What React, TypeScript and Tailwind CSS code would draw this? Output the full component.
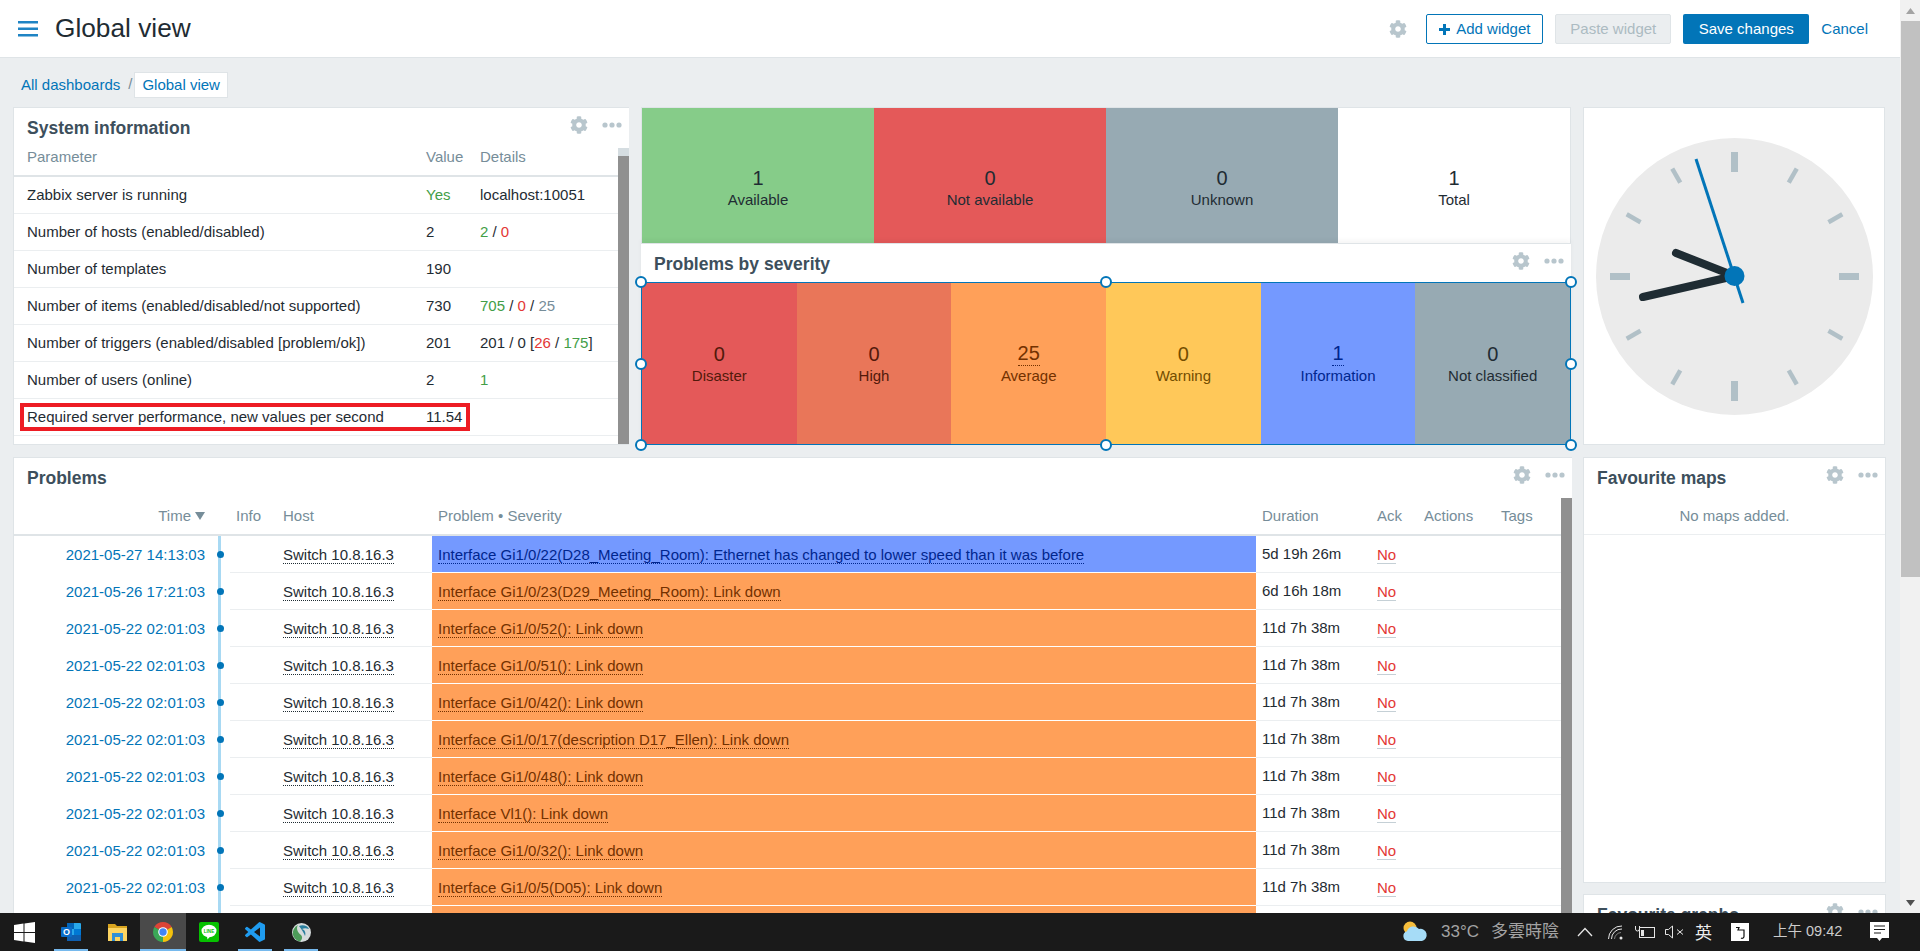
import { FaCog } from 'react-icons/fa'

const problems = [
  { time: '2021-05-27 14:13:03', text: 'Interface Gi1/0/22(D28_Meeting_Room): Ethernet has changed to lower speed than it was before', duration: '5d 19h 26m', info: true },
  { time: '2021-05-26 17:21:03', text: 'Interface Gi1/0/23(D29_Meeting_Room): Link down', duration: '6d 16h 18m' },
  { time: '2021-05-22 02:01:03', text: 'Interface Gi1/0/52(): Link down', duration: '11d 7h 38m' },
  { time: '2021-05-22 02:01:03', text: 'Interface Gi1/0/51(): Link down', duration: '11d 7h 38m' },
  { time: '2021-05-22 02:01:03', text: 'Interface Gi1/0/42(): Link down', duration: '11d 7h 38m' },
  { time: '2021-05-22 02:01:03', text: 'Interface Gi1/0/17(description D17_Ellen): Link down', duration: '11d 7h 38m' },
  { time: '2021-05-22 02:01:03', text: 'Interface Gi1/0/48(): Link down', duration: '11d 7h 38m' },
  { time: '2021-05-22 02:01:03', text: 'Interface Vl1(): Link down', duration: '11d 7h 38m' },
  { time: '2021-05-22 02:01:03', text: 'Interface Gi1/0/32(): Link down', duration: '11d 7h 38m' },
  { time: '2021-05-22 02:01:03', text: 'Interface Gi1/0/5(D05): Link down', duration: '11d 7h 38m' },
]

const severities = [
  { label: 'Disaster', value: '0', cell: 'bg-[#e45959] text-[#52190b]' },
  { label: 'High', value: '0', cell: 'bg-[#e97659] text-[#52190b]' },
  { label: 'Average', value: '25', cell: 'bg-[#ffa059] text-[#733100]', link: true },
  { label: 'Warning', value: '0', cell: 'bg-[#ffc859] text-[#734d00]' },
  { label: 'Information', value: '1', cell: 'bg-[#7499ff] text-[#00268e]', link: true },
  { label: 'Not classified', value: '0', cell: 'bg-[#97aab3] text-[#1f2c33]' },
]

const hosts = [
  { label: 'Available', value: '1', cell: 'bg-[#86cc89] pt-[25px]' },
  { label: 'Not available', value: '0', cell: 'bg-[#e45959] pt-[25px]' },
  { label: 'Unknown', value: '0', cell: 'bg-[#97aab3] pt-[25px]' },
  { label: 'Total', value: '1', cell: 'bg-white pt-[25px]' },
]

function WidgetIcons() {
  return (
    <div className="flex items-center self-start gap-[14px] pt-[8px] pr-[7px]">
      <FaCog className="w-[18px] h-[18px] text-[#b8c6cd]" />
      <svg width="20" height="6" viewBox="0 0 20 6" className="text-[#b8c6cd]" fill="currentColor">
        <circle cx="3" cy="3" r="2.6" />
        <circle cx="10" cy="3" r="2.6" />
        <circle cx="17" cy="3" r="2.6" />
      </svg>
    </div>
  )
}

function WidgetHead({ title, short }: { title: string; short?: boolean }) {
  return (
    <div className={`flex justify-between pl-[13px] shrink-0 ${short ? 'h-[38px]' : 'h-[40px]'}`}>
      <div className="text-[17.5px] font-bold text-[#3d4f5c] leading-[40px] whitespace-nowrap">{title}</div>
      <WidgetIcons />
    </div>
  )
}

function Stat({ label, value, cell, link }: { label: string; value: string; cell: string; link?: boolean }) {
  return (
    <div className={`flex-1 flex flex-col items-center justify-center ${cell}`}>
      <div className={`text-[20px] leading-[24px] ${link ? 'border-b border-dotted border-current' : ''}`}>{value}</div>
      <div className="text-[15px] leading-[20px]">{label}</div>
    </div>
  )
}

function Handle({ pos }: { pos: string }) {
  return <div className={`absolute w-[12px] h-[12px] rounded-full bg-white border-2 border-[#0275b8] ${pos}`} />
}

function SysRow({ name, value, valueClass, children, marked }: { name: string; value: string; valueClass?: string; children?: React.ReactNode; marked?: boolean }) {
  return (
    <div className="relative flex items-center h-[37px] border-b border-[#ebeef0] text-[#1f2c33]">
      <div className="w-[412px] pl-[13px]">{name}</div>
      <div className={`w-[54px] ${valueClass ?? ''}`}>{value}</div>
      <div>{children}</div>
      {marked && <div className="absolute left-[6px] top-[4px] w-[450px] h-[28px] border-[4px] border-[#ed1c24]" />}
    </div>
  )
}

function Clock() {
  const ticks = Array.from({ length: 12 }, (_, i) => i * 30)
  return (
    <svg width="277" height="277" viewBox="0 0 277 277">
      <circle cx="138.5" cy="138.5" r="138.5" fill="#ebebeb" />
      {ticks.map((a) =>
        a % 90 === 0 ? (
          <rect key={a} x="135" y="14" width="7" height="20" fill="#b1c0c7" transform={`rotate(${a} 138.5 138.5)`} />
        ) : (
          <rect key={a} x="136.25" y="14" width="4.5" height="16" fill="#b1c0c7" transform={`rotate(${a} 138.5 138.5)`} />
        )
      )}
      <line x1="138.5" y1="138" x2="47" y2="159" stroke="#1f2c33" strokeWidth="8" strokeLinecap="round" />
      <line x1="138.5" y1="138" x2="80" y2="115" stroke="#1f2c33" strokeWidth="8" strokeLinecap="round" />
      <line x1="100" y1="21" x2="147" y2="165" stroke="#0275b8" strokeWidth="3" />
      <circle cx="138.5" cy="138" r="10" fill="#0275b8" />
    </svg>
  )
}

function TaskItem({ children, active, open }: { children: React.ReactNode; active?: boolean; open?: boolean }) {
  return (
    <div className={`relative w-[46px] h-full flex items-center justify-center ${active ? 'bg-[#4a4a4a]' : ''}`}>
      {children}
      {open && <div className={`absolute bottom-0 h-[2px] bg-[#76b9ed] ${active ? 'inset-x-0' : 'inset-x-[6px]'}`} />}
    </div>
  )
}

function Taskbar() {
  return (
    <div className="relative z-10 h-[38px] bg-[#1a1a1a] flex items-stretch shrink-0 font-['Liberation_Sans','Noto_Sans_CJK_TC',sans-serif]">
      <div className="w-[48px] flex items-center justify-center">
        <svg width="21" height="21" viewBox="0 0 21 21" fill="#fff">
          <polygon points="0,3 9.5,1.6 9.5,10 0,10" />
          <polygon points="10.5,1.4 21,0 21,10 10.5,10" />
          <polygon points="0,11 9.5,11 9.5,19.4 0,18" />
          <polygon points="10.5,11 21,11 21,21 10.5,19.6" />
        </svg>
      </div>
      <TaskItem open>
        <svg width="21" height="20" viewBox="0 0 21 20">
          <rect x="6" y="1" width="14" height="18" rx="1" fill="#28a8ea" />
          <rect x="6" y="1" width="7" height="6" fill="#0364b8" />
          <rect x="13" y="7" width="7" height="6" fill="#0078d4" />
          <polygon points="6,13 20,13 20,19 6,19" fill="#0f5fb0" />
          <rect x="0" y="5" width="11" height="10" rx="1" fill="#0a6cc8" />
          <text x="5.5" y="13" textAnchor="middle" fontSize="9" fontWeight="700" fill="#fff" fontFamily="Liberation Sans">O</text>
        </svg>
      </TaskItem>
      <TaskItem>
        <svg width="19" height="18" viewBox="0 0 19 18">
          <path d="M0 1h7l2 2h10v4H0z" fill="#d9a520" />
          <rect x="0" y="5" width="19" height="13" fill="#fcd462" />
          <path d="M4 10h11v8h-3v-4H7v4H4z" fill="#2f8fd8" />
        </svg>
      </TaskItem>
      <TaskItem active open>
        <svg width="20" height="20" viewBox="0 0 20 20">
          <path d="M10 10L1.34 5A10 10 0 0 1 18.66 5Z" fill="#db4437" />
          <path d="M10 10L18.66 5A10 10 0 0 1 10 20Z" fill="#f4c20d" />
          <path d="M10 10L10 20A10 10 0 0 1 1.34 5Z" fill="#3aa757" />
          <circle cx="10" cy="10" r="4.8" fill="#fff" />
          <circle cx="10" cy="10" r="3.7" fill="#4285f4" />
        </svg>
      </TaskItem>
      <TaskItem>
        <svg width="20" height="20" viewBox="0 0 20 20">
          <rect width="20" height="20" rx="2" fill="#06c100" />
          <ellipse cx="10" cy="9" rx="7.5" ry="6.2" fill="#fff" />
          <path d="M8 14.5h3L8.5 17.5z" fill="#fff" />
          <text x="10" y="10.8" textAnchor="middle" fontSize="4.6" fontWeight="700" fill="#06c100" fontFamily="Liberation Sans">LINE</text>
        </svg>
      </TaskItem>
      <TaskItem open>
        <svg width="20" height="20" viewBox="0 0 24 24">
          <path
            fill="#1f9cf0"
            d="M23.15 2.587L18.21.21a1.494 1.494 0 0 0-1.705.29l-9.46 8.63-4.12-3.128a.999.999 0 0 0-1.276.057L.327 7.261A1 1 0 0 0 .326 8.74L3.899 12 .326 15.26a1 1 0 0 0 .001 1.479L1.65 17.94a.999.999 0 0 0 1.276.057l4.12-3.128 9.46 8.63a1.492 1.492 0 0 0 1.704.29l4.942-2.377A1.5 1.5 0 0 0 24 20.06V3.939a1.5 1.5 0 0 0-.85-1.352zm-5.146 14.861L10.826 12l7.178-5.448v10.896z"
          />
        </svg>
      </TaskItem>
      <TaskItem open>
        <svg width="19" height="19" viewBox="0 0 19 19">
          <circle cx="9.5" cy="9.5" r="9.5" fill="#d5dbdc" />
          <path d="M1 12a9 9 0 0 1 5-10c-2 3-1 7 3 10 2 2 1 5-1 6.500A9 9 0 0 1 1 12z" fill="#4d9c5a" />
          <path d="M7 3c4-2 9 0 10 3-3-1-5-1-7 0 3 1 4 4 3 7-1-3-3-6-6-10z" fill="#2a7f9e" />
        </svg>
      </TaskItem>

      <div className="ml-auto flex items-center text-[#a3a3a3]">
        <svg width="26" height="22" viewBox="0 0 26 22">
          <circle cx="8" cy="7" r="6.500" fill="#f6bd3b" />
          <path d="M6 20a5 5 0 0 1-1-9.800A7 7 0 0 1 17 8a5.500 5.500 0 0 1 3 12z" fill="#a6dcf7" />
        </svg>
        <div className="ml-[13px] w-[39px] text-[17px] whitespace-nowrap">33°C</div>
        <div className="ml-[11px] w-[70px] text-[17px] whitespace-nowrap">多雲時陰</div>
        <svg className="ml-[16px]" width="16" height="10" viewBox="0 0 16 10" fill="none" stroke="#e6e6e6" strokeWidth="1.300">
          <polyline points="1,9 8,1.500 15,9" />
        </svg>
        <svg className="ml-[15px]" width="15" height="15" viewBox="0 0 15 15" fill="none" stroke="#e6e6e6">
          <path d="M0.500 14A13 13 0 0 1 14 1" />
          <path d="M3.500 14A10 10 0 0 1 14 4" />
          <path d="M6.500 14A7 7 0 0 1 13 7.500" strokeOpacity=".5" />
          <circle cx="13" cy="13" r="1.500" fill="#e6e6e6" stroke="none" />
        </svg>
        <svg className="ml-[12px]" width="20" height="14" viewBox="0 0 20 14" fill="none" stroke="#e6e6e6">
          <rect x="4.500" y="2.500" width="15" height="10" />
          <rect x="6" y="5" width="3" height="6" fill="#e6e6e6" stroke="none" />
          <path d="M0.500 1v3a2 2 0 0 0 4 0V1" />
        </svg>
        <svg className="ml-[10px]" width="19" height="14" viewBox="0 0 19 14" fill="none" stroke="#e6e6e6">
          <path d="M0.500 4.500h3l4-3.500v12l-4-3.500h-3z" />
          <path d="M12 4.500l6 5M18 4.500l-6 5" />
        </svg>
        <div className="ml-[11px] w-[18px] text-[17px] text-[#eeeeee] font-['Noto_Sans_CJK_TC',sans-serif]">英</div>
        <div className="ml-[18px] w-[18px] h-[18px] bg-white flex items-center justify-center">
          <svg width="10" height="13" viewBox="0 0 10 13" fill="none" stroke="#111" strokeWidth="1.200">
            <path d="M1 1.500h3L3 4h6v6a2 2 0 0 1-3 2" />
          </svg>
        </div>
        <div className="ml-[24px] w-[72px] text-[14.500px] text-[#cccccc] whitespace-nowrap">上午 09:42</div>
        <svg className="ml-[25px] mr-[31px]" width="19" height="20" viewBox="0 0 19 20">
          <path d="M0 0h19v16H12l-2.500 3L7 16H0z" fill="#fff" />
          <path d="M4 4h11M4 7.500h11M4 11h7" stroke="#1a1a1a" />
        </svg>
      </div>
    </div>
  )
}

export default function App() {
  return (
    <div className="h-[951px] w-[1920px] flex flex-col overflow-hidden text-[15px] font-['Liberation_Sans',Arial,sans-serif] text-[#1f2c33]">
      <div className="flex flex-1 min-h-0">
        <div className="w-[1900px] bg-[#ebeef0] flex flex-col min-h-0">
          {/* Header */}
          <div className="h-[58px] shrink-0 bg-white border-b border-[#dfe4e7] flex items-center pt-px">
            <svg className="ml-[18px]" width="20" height="16" viewBox="0 0 20 16" fill="#1f84c4">
              <rect width="20" height="2.500" />
              <rect y="6.500" width="20" height="2.500" />
              <rect y="13" width="20" height="2.500" />
            </svg>
            <h1 className="ml-[17px] text-[26.250px] text-[#1f2c33]">Global view</h1>
            <div className="ml-auto flex items-center mr-[32px]">
              <FaCog className="w-[18px] h-[18px] text-[#b8c6cd] mr-[19px]" />
              <button className="w-[117px] h-[30px] rounded-[2px] border border-[#0275b8] bg-white text-[#0275b8] flex items-center justify-center gap-[6px]">
                <svg width="11" height="11" viewBox="0 0 11 11" fill="#0275b8">
                  <rect y="4" width="11" height="3" />
                  <rect x="4" width="3" height="11" />
                </svg>
                Add widget
              </button>
              <button className="ml-[12px] w-[116px] h-[30px] rounded-[2px] border border-[#dfe4e7] bg-[#ebeef0] text-[#acbbc2]">Paste widget</button>
              <button className="ml-[12px] w-[126px] h-[30px] rounded-[2px] bg-[#0275b8] text-white">Save changes</button>
              <span className="ml-[12px] text-[#0275b8]">Cancel</span>
            </div>
          </div>

          {/* Breadcrumb */}
          <div className="h-[49px] shrink-0 flex items-start pt-[14px] pl-[21px]">
            <span className="text-[#0275b8] leading-[26px]">All dashboards</span>
            <span className="ml-[8px] text-[#768d99] leading-[24px]">/</span>
            <span className="ml-[2px] h-[26px] px-[7px] bg-white border border-[#dfe4e7] text-[#0275b8] leading-[24px]">Global view</span>
          </div>

          {/* Top row */}
          <div className="flex h-[338px] shrink-0 pl-[13px]">
            <div className="w-[616px] bg-white border border-[#dfe4e7] border-r-0 flex flex-col">
              <WidgetHead title="System information" />
              <div className="flex flex-1 min-h-0">
                <div className="flex-1 min-w-0">
                  <div className="flex h-[29px] border-b-2 border-[#dfe4e7] text-[#768d99] leading-[18px]">
                    <div className="w-[412px] pl-[13px]">Parameter</div>
                    <div className="w-[54px]">Value</div>
                    <div>Details</div>
                  </div>
                  <SysRow name="Zabbix server is running" value="Yes" valueClass="text-[#429e47]">localhost:10051</SysRow>
                  <SysRow name="Number of hosts (enabled/disabled)" value="2">
                    <span className="text-[#429e47]">2</span> / <span className="text-[#e33734]">0</span>
                  </SysRow>
                  <SysRow name="Number of templates" value="190" />
                  <SysRow name="Number of items (enabled/disabled/not supported)" value="730">
                    <span className="text-[#429e47]">705</span> / <span className="text-[#e33734]">0</span> / <span className="text-[#768d99]">25</span>
                  </SysRow>
                  <SysRow name="Number of triggers (enabled/disabled [problem/ok])" value="201">
                    201 / 0 [<span className="text-[#e33734]">26</span> / <span className="text-[#429e47]">175</span>]
                  </SysRow>
                  <SysRow name="Number of users (online)" value="2">
                    <span className="text-[#429e47]">1</span>
                  </SysRow>
                  <SysRow name="Required server performance, new values per second" value="11.54" marked />
                </div>
                <div className="w-[11px] flex flex-col">
                  <div className="h-[8px] bg-[#d5dde1]" />
                  <div className="flex-1 bg-[#909090]" />
                </div>
              </div>
            </div>

            <div className="relative ml-[12px] w-[930px] flex flex-col">
              <div className="h-[136px] bg-white border border-[#dfe4e7] border-b-0 flex">
                {hosts.map((h) => (
                  <Stat key={h.label} {...h} />
                ))}
              </div>
              <div className="flex-1 min-h-0 flex flex-col bg-white border-t border-[#dfe4e7] shadow-[0_-3px_5px_rgba(0,0,0,0.04)]">
                <WidgetHead title="Problems by severity" short />
                <div className="flex-1 flex border border-[#0275b8]">
                  {severities.map((s) => (
                    <Stat key={s.label} {...s} />
                  ))}
                </div>
              </div>
              <Handle pos="left-[-6px] top-[169px]" />
              <Handle pos="left-[459px] top-[169px]" />
              <Handle pos="right-[-6px] top-[169px]" />
              <Handle pos="left-[-6px] top-[251px]" />
              <Handle pos="right-[-6px] top-[251px]" />
              <Handle pos="left-[-6px] bottom-[-6px]" />
              <Handle pos="left-[459px] bottom-[-6px]" />
              <Handle pos="right-[-6px] bottom-[-6px]" />
            </div>

            <div className="ml-[12px] w-[302px] bg-white border border-[#dfe4e7] flex items-center justify-center">
              <Clock />
            </div>
          </div>

          {/* Bottom row */}
          <div className="flex flex-1 min-h-0 pl-[13px] pt-[12px] overflow-hidden">
            <div className="w-[1559px] h-[456px] overflow-hidden shrink-0 bg-white border border-[#dfe4e7] border-r-0 border-b-0 flex flex-col">
              <WidgetHead title="Problems" />
              <div className="flex flex-1 min-h-0">
                <div className="flex-1 min-w-0">
                  <div className="flex items-center h-[38px] border-b-2 border-[#dfe4e7] text-[#768d99]">
                    <div className="w-[191px] flex items-center justify-end gap-[4px]">
                      Time
                      <svg width="10" height="8" viewBox="0 0 10 8" fill="#768d99">
                        <polygon points="0,0 10,0 5,8" />
                      </svg>
                    </div>
                    <div className="w-[31px]" />
                    <div className="w-[47px]">Info</div>
                    <div className="w-[155px]">Host</div>
                    <div className="w-[824px]">Problem • Severity</div>
                    <div className="w-[115px]">Duration</div>
                    <div className="w-[47px]">Ack</div>
                    <div className="w-[77px]">Actions</div>
                    <div>Tags</div>
                  </div>
                  {problems.map((p, i) => (
                    <div key={i} className="flex h-[37px]">
                      <div className="w-[191px] flex items-center justify-end text-[#0275b8] pt-px">{p.time}</div>
                      <div className="relative w-[25px]">
                        <div className="absolute left-[13px] top-0 bottom-0 w-[2.500px] bg-[#a8d9f3]" />
                        <div className="absolute left-[12px] top-[15px] w-[7px] h-[7px] rounded-full bg-[#0275b8]" />
                      </div>
                      <div className="flex-1 flex items-stretch border-b border-[#ebeef0]">
                        <div className="w-[53px]" />
                        <div className="w-[149px] flex items-center pt-px">
                          <span className="border-b border-dotted border-[#1f2c33] leading-[17px]">Switch 10.8.16.3</span>
                        </div>
                        <div className={`w-[824px] -mb-px border-b border-white flex items-center pl-[6px] pt-px ${p.info ? 'bg-[#7499ff] text-[#00268e]' : 'bg-[#ffa059] text-[#733100]'}`}>
                          <span className="border-b border-dotted border-current leading-[17px]">{p.text}</span>
                        </div>
                        <div className="w-[121px] flex items-center pl-[6px] pt-px">{p.duration}</div>
                        <div className="flex items-center pt-px">
                          <span className="text-[#e33734] border-b border-[#c5d0d6] leading-[17px]">No</span>
                        </div>
                      </div>
                    </div>
                  ))}
                  {/* eleventh row is only a strip above the taskbar */}
                  <div className="flex h-[37px]">
                    <div className="w-[191px]" />
                    <div className="relative w-[25px]">
                      <div className="absolute left-[13px] top-0 bottom-0 w-[2.500px] bg-[#a8d9f3]" />
                    </div>
                    <div className="w-[53px]" />
                    <div className="w-[149px]" />
                    <div className="w-[824px] bg-[#ffa059]" />
                  </div>
                </div>
                <div className="w-[11px] bg-[#909090]" />
              </div>
            </div>

            <div className="ml-[11px] w-[303px] flex flex-col gap-[11px]">
              <div className="h-[426px] shrink-0 bg-white border border-[#dfe4e7] flex flex-col">
                <WidgetHead title="Favourite maps" />
                <div className="h-[37px] pt-px flex items-center justify-center border-b border-[#ebeef0] text-[#768d99]">No maps added.</div>
              </div>
              <div className="h-[200px] shrink-0 bg-white border border-[#dfe4e7]">
                <WidgetHead title="Favourite graphs" />
              </div>
            </div>
          </div>
        </div>

        {/* Page scrollbar */}
        <div className="w-[20px] bg-[#f1f1f1] pl-px flex flex-col">
          <div className="h-[21px] flex items-center justify-center">
            <svg width="9" height="6" viewBox="0 0 9 6" fill="#a3a3a3">
              <polygon points="0,6 9,6 4.500,0" />
            </svg>
          </div>
          <div className="h-[556px] bg-[#c1c1c1]" />
          <div className="flex-1" />
          <div className="h-[21px] flex items-center justify-center">
            <svg width="9" height="6" viewBox="0 0 9 6" fill="#505050">
              <polygon points="0,0 9,0 4.500,6" />
            </svg>
          </div>
        </div>
      </div>

      <Taskbar />
    </div>
  )
}
